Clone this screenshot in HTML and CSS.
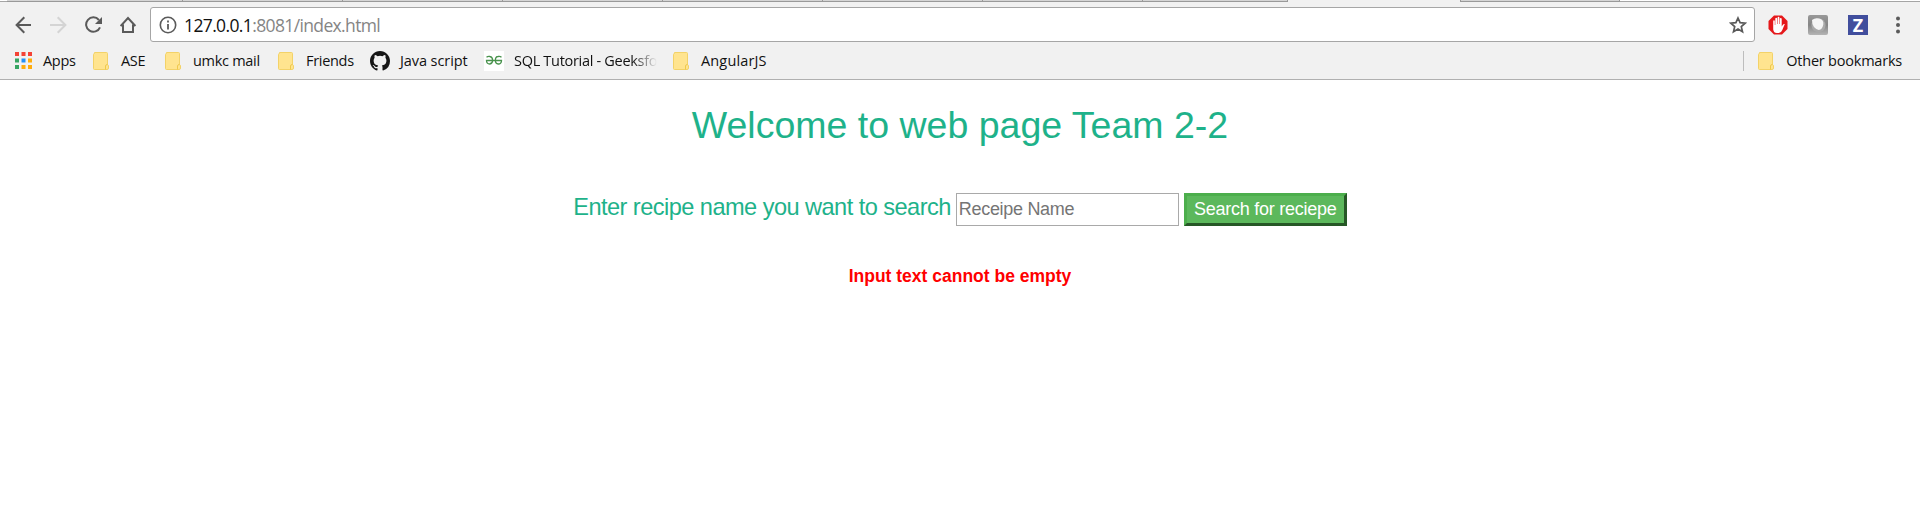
FILE: index.html
```html
<!DOCTYPE html>
<html lang="en">
<head>
<meta charset="utf-8">
<title>Recipe search</title>
<link rel="stylesheet" href="styles.css">
</head>
<body>
<svg class="defs" width="0" height="0">
  <symbol id="folder" viewBox="0 0 16 18">
    <path d="M1.5.5h12q1 0 1 1v11.2q1 .3 1 1.3v2q0 1.500-1.500 1.500H1.500q-1 0-1-1v-14q0-1 1-1z" fill="#ffe48f" stroke="#f3d268"/>
    <path d="M14.500 12.500q-2 0-2 1.500v3.500" fill="none" stroke="#efc94c"/>
  </symbol>
</svg>
<header class="browser">
  <div class="tabs">
    <i class="tab first"></i><i class="tab"></i><i class="tab"></i><i class="tab"></i><i class="tab"></i><i class="tab"></i><i class="tab"></i><i class="tab last"></i><i class="tab active"></i><i class="tab after"></i>
  </div>
  <div class="toolbar">
    <svg class="back" width="18" height="18" viewBox="0 0 18 18" fill="none" stroke="#5a5a5a" stroke-width="2"><path d="M16 9H2M9.300 1.300 1.600 9l7.700 7.700"/></svg>
    <svg class="forward" width="18" height="18" viewBox="0 0 18 18" fill="none" stroke="#d4d4d4" stroke-width="2"><path d="M0 9h15M7.700 1.300 15.400 9l-7.700 7.700"/></svg>
    <svg class="reload" width="18" height="18" viewBox="0 0 18 18"><path d="M13.900 4A7.200 7.200 0 1 0 15 11.300" fill="none" stroke="#5a5a5a" stroke-width="2"/><path d="M17 1v7h-7z" fill="#5a5a5a"/></svg>
    <svg class="home" width="18" height="18" viewBox="0 0 18 18" fill="none" stroke="#5a5a5a" stroke-width="2"><path d="M.6 10 8 2l7.400 8M3 8.500v7.500h10V8.500"/></svg>
    <div class="address">
      <svg class="info" width="18" height="18" viewBox="0 0 18 18"><circle cx="9" cy="9" r="7.700" fill="none" stroke="#5a5a5a" stroke-width="1.600"/><path d="M8.100 4.500h1.800v2H8.100zM8.100 8h1.800v5.500H8.100z" fill="#5a5a5a"/></svg>
      <span class="url">127.0.0.1<span class="path">:8081/index.html</span></span>
      <svg class="star" width="18" height="18" viewBox="0 0 18 18" fill="none" stroke="#5a5a5a" stroke-width="1.700"><path d="m9 2 2.100 4.700 5.100.5-3.900 3.400 1.200 5.100L9 13l-4.500 2.700 1.200-5.100-3.900-3.400 5.100-.5z"/></svg>
    </div>
    <svg class="ext stop" width="20" height="20" viewBox="0 0 20 20"><path d="M6 .5h8L19.500 6v8L14 19.500H6L.5 14V6z" fill="#e5181b"/><path d="M5.200 6.200q0-1 .8-1t.8 1V10h.5V3.800q0-1 .9-1t.9 1V9h.5V2.800q0-1 .9-1t.9 1V9h.5V4q0-1 .9-1t.9 1v7.500l1.400-2q.8-1 1.700-.4l-2.500 6q-.9 2.700-3.500 2.900h-2q-3 0-3.600-3.500z" fill="#fff"/></svg>
    <svg class="ext globe" width="20" height="20" viewBox="0 0 20 20"><defs><linearGradient id="metal" x2="0" y2="1"><stop stop-color="#999"/><stop offset=".5" stop-color="#858585"/><stop offset="1" stop-color="#b5b5b5"/></linearGradient></defs><rect width="20" height="20" rx="2" fill="url(#metal)"/><circle cx="10.500" cy="10.300" r="7" fill="#aaa"/><path d="M4 5q3-2.500 7-1.500 5 1 4.300 6-1 5-4.500 5.500Q4 13 4 5z" fill="#f5f5f5"/></svg>
    <span class="zed">Z</span>
    <svg class="menu" width="4" height="18" viewBox="0 0 4 18" fill="#5a5a5a"><circle cx="2" cy="2.500" r="2"/><circle cx="2" cy="9" r="2"/><circle cx="2" cy="15.500" r="2"/></svg>
  </div>
  <nav class="bookmarks">
    <a class="mark apps"><svg width="17" height="17" viewBox="0 0 17 17"><path d="M0 0h4v4H0zM6.500 0h4v4h-4zM13 0h4v4h-4z" fill="#f44336"/><path d="M0 6.500h4v4H0zM0 13h4v4H0z" fill="#36a562"/><path d="M6.500 6.500h4v4h-4z" fill="#2490f5"/><path d="M13 6.500h4v4h-4zM13 13h4v4h-4zM6.500 13h4v4h-4z" fill="#ffad0d"/></svg><span>Apps</span></a>
    <a class="mark ase"><svg width="16" height="18"><use href="#folder"/></svg><span>ASE</span></a>
    <a class="mark mail"><svg width="16" height="18"><use href="#folder"/></svg><span>umkc mail</span></a>
    <a class="mark friends"><svg width="16" height="18"><use href="#folder"/></svg><span>Friends</span></a>
    <a class="mark java"><svg width="20" height="20" viewBox="0 0 16 16"><path fill="#161616" d="M8 0C3.580 0 0 3.580 0 8c0 3.540 2.290 6.530 5.470 7.590.4.070.55-.17.55-.38 0-.19-.01-.82-.01-1.490-2.010.37-2.530-.49-2.690-.94-.09-.23-.48-.94-.82-1.130-.28-.15-.68-.52-.01-.53.63-.01 1.080.58 1.230.82.72 1.210 1.870.87 2.330.66.07-.52.28-.87.51-1.070-1.780-.2-3.640-.89-3.640-3.950 0-.87.31-1.590.82-2.150-.08-.2-.36-1.020.08-2.120 0 0 .67-.21 2.200.82a7.420 7.420 0 0 1 4 0c1.530-1.040 2.200-.82 2.200-.82.44 1.100.16 1.920.08 2.120.51.56.82 1.270.82 2.150 0 3.070-1.870 3.750-3.650 3.950.29.25.54.73.54 1.480 0 1.070-.01 1.930-.01 2.200 0 .21.15.46.55.38A8 8 0 0 0 16 8c0-4.420-3.580-8-8-8z"/></svg><span>Java script</span></a>
    <a class="mark sql"><svg width="20" height="20" viewBox="0 0 20 20"><path d="M0 0h20v20H0z" fill="#fff"/><g fill="none" stroke="#48924c" stroke-width="1.300"><path d="M2.500 6.200Q4 5 6 5.500 8.600 6 8.600 9.300t-2.800 3.700q-3.300 0-3.300-3.500h15q0 3.500-3.300 3.500-2.800 0-2.800-3.700T14 5.500q2-.5 3.500.7"/></g></svg><span>SQL Tutorial - Geeksfo</span></a>
    <a class="mark angular"><svg width="16" height="18"><use href="#folder"/></svg><span>AngularJS</span></a>
    <a class="mark other"><svg width="16" height="18"><use href="#folder"/></svg><span>Other bookmarks</span></a>
  </nav>
</header>
<main>
  <h2>Welcome to web page Team 2-2</h2>
  <form class="search">
    <label for="recipe">Enter recipe name you want to search</label>
    <input id="recipe" type="text" placeholder="Receipe Name">
    <button type="button">Search for reciepe</button>
  </form>
  <p class="error">Input text cannot be empty</p>
</main>
</body>
</html>
```
FILE: styles.css
```css
* { box-sizing: border-box; }
body { margin: 0; background: #fff; font-family: "Liberation Sans", Arial, sans-serif; }
svg { display: block; flex: none; }
.defs { position: absolute; }
.browser { height: 80px; background: #f1f1f1; border-bottom: 1px solid #b0b0b0; font-family: "Open Sans", "Noto Sans", sans-serif; }
.tabs { display: flex; height: 2px; padding-left: 7px; background: linear-gradient(#fff 1px, #a5a5a5 1px); }
.tab { width: 160px; height: 2px; background: #d5d5d5; border-bottom: 1px solid #999; border-right: 1px solid #999; }
.tab.first { width: 176px; }
.tab.last { width: 145px; }
.tab.active { width: 173px; background: #f1f1f1; border-bottom: 0; }
.tab.after { width: 159px; }
.toolbar { display: flex; align-items: center; height: 35px; margin-top: 5px; padding-left: 15px; }
.forward { margin-left: 17px; }
.reload { margin-left: 17px; }
.home { margin-left: 17px; }
.address { display: flex; align-items: center; flex: none; width: 1605px; height: 35px; margin-left: 12px; padding: 0 7px 0 8px; background: #fff; border: 1px solid #a6a6a6; border-radius: 3px; }
.url { margin-left: 7px; font-size: 17.5px; letter-spacing: -.63px; line-height: 30px; white-space: nowrap; color: #111; }
.path { color: #858585; }
.star { margin-left: auto; }
.stop { margin-left: 13px; }
.globe { margin-left: 20px; }
.zed { display: flex; align-items: center; justify-content: center; flex: none; width: 20px; height: 20px; margin-left: 20px; background: #414e9d; color: #fff; font: bold 18px "Open Sans", sans-serif; }
.menu { margin-left: 28px; }
.bookmarks { display: flex; align-items: center; height: 37px; padding-left: 15px; }
.mark { display: flex; align-items: center; flex: none; height: 24px; font-size: 14.5px; letter-spacing: -.3px; white-space: nowrap; color: #111; }
.mark span { margin-left: 12px; }
.apps { width: 78px; }
.apps span { margin-left: 11px; }
.ase { width: 72px; }
.mail { width: 113px; }
.friends { width: 92px; }
.java { width: 114px; letter-spacing: -.08px; }
.java span { margin-left: 10px; }
.sql { width: 189px; }
.sql span { width: 143px; margin-left: 10px; overflow: hidden; -webkit-mask-image: linear-gradient(90deg, #000 118px, transparent 143px); mask-image: linear-gradient(90deg, #000 118px, transparent 143px); }
.angular { letter-spacing: .15px; }
.other { margin: 0 18px 0 auto; height: 20px; padding-left: 14px; border-left: 1px solid #bdbdbd; letter-spacing: -.22px; }
main { display: flex; flex-direction: column; align-items: center; }
h2 { margin: 25px 0 0; font-size: 37.5px; font-weight: 400; line-height: 41px; color: #1eb28a; }
.search { display: flex; align-items: flex-start; margin-top: 47px; color: #1eb28a; }
.search label { font-size: 23.6px; letter-spacing: -.55px; line-height: 29px; }
.search input { width: 223px; height: 33px; margin-left: 5px; padding: 0 2px; border: 1px solid #a9a9a9; border-radius: 0; font: 18px "Liberation Sans", Arial, sans-serif; letter-spacing: -.3px; }
.search input::placeholder { color: #757575; }
.search button { width: 163px; height: 33px; margin-left: 5px; padding: 0; background: #5cb85c; border: 3px solid; border-color: #4cae4c #265726 #265726 #4cae4c; color: #fff; font: 18px "Liberation Sans", Arial, sans-serif; letter-spacing: -.25px; }
.error { margin: 38px 0 0; color: red; font-size: 17.5px; font-weight: 700; line-height: 25px; }
```
